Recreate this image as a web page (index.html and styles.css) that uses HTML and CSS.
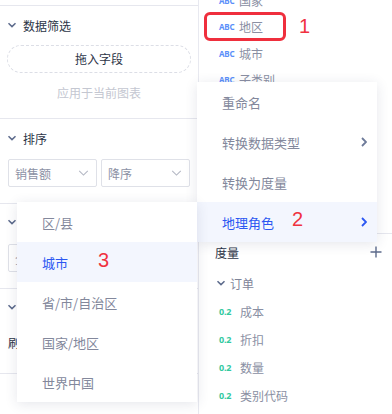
FILE: index.html
```html
<!DOCTYPE html>
<html>
<head>
  <title>地理角色</title>
  <link rel="stylesheet" href="styles.css">
</head>
<body>
  <div class="workspace">
    <!-- left: chart config -->
    <aside class="config-panel">
      <div class="top-gap"></div>

      <section class="config-section filter-section">
        <div class="section-title">
          <svg class="caret" viewBox="0 0 10 10"><path d="M1.5 3.2 L5 6.6 L8.5 3.2"/></svg>
          <span>数据筛选</span>
        </div>
        <div class="drop-zone">拖入字段</div>
        <div class="hint">应用于当前图表</div>
      </section>

      <section class="config-section">
        <div class="section-title">
          <svg class="caret" viewBox="0 0 10 10"><path d="M1.5 3.2 L5 6.6 L8.5 3.2"/></svg>
          <span>排序</span>
        </div>
        <div class="select-row">
          <div class="select">销售额<svg class="select-arrow" viewBox="0 0 12 7"><path d="M1 1 L6 6 L11 1"/></svg></div>
          <div class="select">降序<svg class="select-arrow" viewBox="0 0 12 7"><path d="M1 1 L6 6 L11 1"/></svg></div>
        </div>
      </section>

      <section class="config-section hidden-a">
        <div class="section-title">
          <svg class="caret" viewBox="0 0 10 10"><path d="M1.5 3.2 L5 6.6 L8.5 3.2"/></svg>
          <span>显示数量</span>
        </div>
        <div class="select-row">
          <div class="select">全部<svg class="select-arrow" viewBox="0 0 12 7"><path d="M1 1 L6 6 L11 1"/></svg></div>
        </div>
      </section>

      <section class="config-section hidden-b">
        <div class="section-title">
          <svg class="caret" viewBox="0 0 10 10"><path d="M1.5 3.2 L5 6.6 L8.5 3.2"/></svg>
          <span>数据刷新</span>
        </div>
        <div class="plain-text">刷新频率</div>
      </section>

      <section class="config-section last"></section>
    </aside>

    <!-- right: fields -->
    <section class="field-panel">
      <div class="dimension-list">
        <div class="field-row"><span class="type abc">ABC</span>国家</div>
        <div class="field-row"><span class="type abc">ABC</span>地区</div>
        <div class="field-row"><span class="type abc">ABC</span>城市</div>
        <div class="field-row"><span class="type abc">ABC</span>子类别</div>
        <div class="field-row"><span class="type abc">ABC</span>产品名称</div>
        <div class="field-row"><span class="type abc">ABC</span>类别</div>
        <div class="field-row"><span class="type abc">ABC</span>细分</div>
        <div class="field-row"><span class="type abc">ABC</span>邮寄方式</div>
      </div>

      <div class="measure-block">
        <div class="measure-title">
          <span>度量</span>
          <svg class="plus" viewBox="0 0 12 12"><path d="M6 0.5 V11.5 M0.5 6 H11.5"/></svg>
        </div>
        <div class="group-row">
          <svg class="caret" viewBox="0 0 10 10"><path d="M1.5 3.2 L5 6.6 L8.5 3.2"/></svg>
          <span>订单</span>
        </div>
        <div class="field-row measure"><span class="type num">0.2</span>成本</div>
        <div class="field-row measure"><span class="type num">0.2</span>折扣</div>
        <div class="field-row measure"><span class="type num">0.2</span>数量</div>
        <div class="field-row measure"><span class="type num">0.2</span>类别代码</div>
      </div>
    </section>

    <!-- context menu on the field -->
    <ul class="menu menu-main">
      <li class="menu-item">重命名</li>
      <li class="menu-item">转换数据类型<svg class="menu-arrow" viewBox="0 0 6 10"><path d="M1 1 L5 5 L1 9"/></svg></li>
      <li class="menu-item">转换为度量</li>
      <li class="menu-item active">地理角色<svg class="menu-arrow" viewBox="0 0 6 10"><path d="M1 1 L5 5 L1 9"/></svg></li>
    </ul>

    <!-- geo role submenu -->
    <ul class="menu menu-geo">
      <li class="menu-item">区/县</li>
      <li class="menu-item active">城市</li>
      <li class="menu-item">省/市/自治区</li>
      <li class="menu-item">国家/地区</li>
      <li class="menu-item">世界中国</li>
    </ul>

    <!-- step annotations -->
    <div class="mark-box"></div>
    <span class="step step-1">1</span>
    <span class="step step-2">2</span>
    <span class="step step-3">3</span>
  </div>
</body>
</html>
```

FILE: styles.css
```css
/* base */
body {
  margin: 0;
  font-family: "Noto Sans CJK SC", "Noto Sans", sans-serif;
  background-color: #fff;
}
.workspace {
  position: relative;
  width: 392px;
  height: 414px;
  display: flex;
  overflow: hidden;
  background-color: #fff;
}

/* left config panel */
.config-panel {
  width: 198px;
  flex-shrink: 0;
  border-right: 1px solid #e8e9f0;
}
.top-gap {
  height: 5px;
  border-bottom: 1px solid #e6e7ee;
}
.config-section {
  padding: 10px 0 16px;
  border-bottom: 1px solid #e6e7ee;
}
.config-section.hidden-a,
.config-section.hidden-b {
  padding-top: 9px;
}
.config-section.hidden-b {
  padding-bottom: 21px;
}
.config-section.last {
  border-bottom: none;
}
.section-title {
  display: flex;
  align-items: center;
  height: 18px;
  padding-left: 7px;
  font-size: 12px;
  color: #2c3447;
}
.caret {
  width: 10px;
  height: 10px;
  margin-right: 6px;
  fill: none;
  stroke: #5d6b8c;
  stroke-width: 1.5;
}
.drop-zone {
  margin: 11px 7px 0;
  height: 28px;
  box-sizing: border-box;
  border: 1px dashed #dcdee6;
  border-radius: 14px;
  font-size: 12px;
  line-height: 26px;
  text-align: center;
  color: #2c3447;
}
.hint {
  margin-top: 11px;
  height: 18px;
  font-size: 12px;
  line-height: 18px;
  text-align: center;
  color: #c4c7d1;
}
.select-row {
  display: flex;
  gap: 4px;
  margin-top: 12px;
  padding: 0 8px;
}
.hidden-a .select-row {
  margin-top: 13px;
}
.select {
  flex: 1;
  height: 28px;
  box-sizing: border-box;
  display: flex;
  align-items: center;
  justify-content: space-between;
  padding: 0 7px 0 6px;
  border: 1px solid #dfe1e8;
  border-radius: 2px;
  font-size: 12px;
  color: #8c91a5;
}
.select-arrow {
  width: 11px;
  height: 6px;
  fill: none;
  stroke: #b3b7c3;
  stroke-width: 1.2;
}
.plain-text {
  margin-top: 18px;
  padding-left: 8px;
  height: 18px;
  font-size: 12px;
  line-height: 18px;
  color: #2c3447;
}

/* right field panel */
.field-panel {
  flex: 1;
  min-width: 0;
}
.dimension-list {
  margin-top: -13px;
  padding-bottom: 34px;
  border-bottom: 1px solid #e6e7ee;
}
.field-row {
  display: flex;
  align-items: center;
  height: 26.5px;
  padding-left: 20px;
  font-size: 12px;
  color: #8a8fa3;
  white-space: nowrap;
}
.type {
  width: 14px;
  margin-right: 6px;
  font-family: "Noto Sans", sans-serif;
  font-weight: 700;
  font-size: 8px;
  letter-spacing: -0.2px;
}
.type.abc {
  color: #5b8ff9;
}
.type.num {
  color: #33c9a0;
  font-size: 9px;
  margin-right: 7px;
}
.measure-block {
  padding-top: 9px;
}
.measure-title {
  display: flex;
  align-items: center;
  justify-content: space-between;
  height: 18px;
  padding: 0 10px 0 16px;
  font-size: 12px;
  color: #2c3447;
}
.plus {
  width: 12px;
  height: 12px;
  fill: none;
  stroke: #5d6b8c;
  stroke-width: 1.4;
}
.group-row {
  display: flex;
  align-items: center;
  height: 20px;
  margin-top: 12px;
  padding-left: 17px;
  font-size: 12px;
  color: #7f8498;
}
.group-row .caret {
  margin-right: 4px;
}
.field-row.measure {
  height: 28px;
}
.group-row + .field-row {
  margin-top: 4px;
}

/* popup menus */
.menu {
  position: absolute;
  width: 180px;
  margin: 0;
  padding: 0;
  list-style: none;
  background-color: #fff;
  box-shadow: 0 2px 12px rgba(40, 50, 90, 0.12);
  z-index: 5;
}
.menu-main {
  left: 197px;
  top: 82px;
}
.menu-geo {
  left: 17px;
  top: 202px;
}
.menu-item {
  display: flex;
  align-items: center;
  justify-content: space-between;
  height: 40px;
  padding: 0 10px 0 25px;
  font-size: 13px;
  color: #83889c;
}
.menu-item.active {
  background-color: #f3f6fe;
  color: #2b57f2;
}
.menu-arrow {
  width: 6px;
  height: 10px;
  fill: none;
  stroke: #6d7a99;
  stroke-width: 1.8;
}
.menu-item.active .menu-arrow {
  stroke: #2b57f2;
}

/* red step marks */
.mark-box {
  position: absolute;
  left: 204px;
  top: 12px;
  width: 82px;
  height: 29px;
  box-sizing: border-box;
  border: 3px solid #ef2f3d;
  border-radius: 6px;
  z-index: 6;
}
.step {
  position: absolute;
  font-family: "Liberation Sans", sans-serif;
  font-size: 20px;
  line-height: 20px;
  color: #f0323f;
  z-index: 6;
}
.step-1 {
  left: 299px;
  top: 16px;
}
.step-2 {
  left: 292px;
  top: 209px;
}
.step-3 {
  left: 98px;
  top: 250px;
}
```
